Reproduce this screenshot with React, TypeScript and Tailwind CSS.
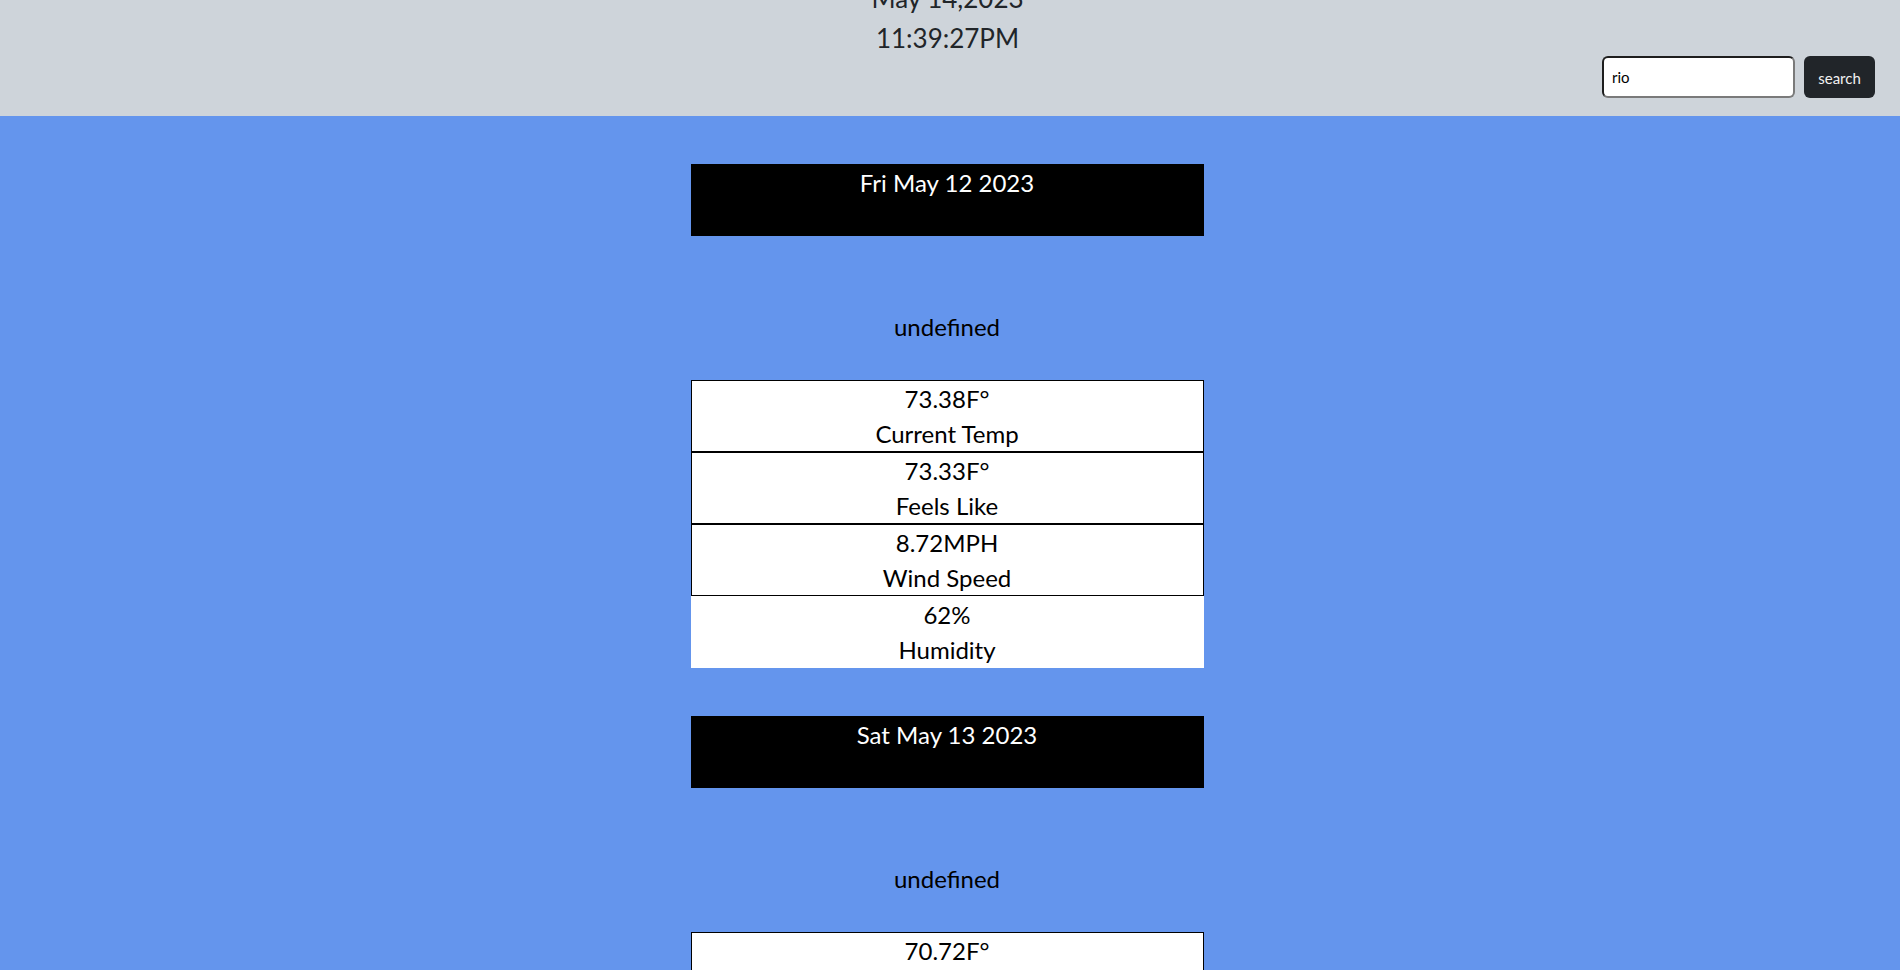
import React from "react";

type Day = {
  date: string;
  temp: string;
  feels: string;
  wind: string;
  humidity: string;
};

const days: Day[] = [
  { date: "Fri May 12 2023", temp: "73.38F°", feels: "73.33F°", wind: "8.72MPH", humidity: "62%" },
  { date: "Sat May 13 2023", temp: "70.72F°", feels: "70.9F°", wind: "7.4MPH", humidity: "71%" },
];

function StatRow({ value, label, bordered }: { value: string; label: string; bordered: boolean }) {
  return (
    <div
      className={
        bordered
          ? "h-[72px] bg-white border border-black flex flex-col items-center justify-center"
          : "h-[72px] bg-white flex flex-col items-center justify-center"
      }
    >
      <span className="leading-[35px]">{value}</span>
      <span className="leading-[35px]">{label}</span>
    </div>
  );
}

function DayCard({ day }: { day: Day }) {
  return (
    <div className="w-[513px] mt-[48px] flex flex-col">
      <div className="h-[72px] bg-black text-white text-center pt-[1px] leading-[36px]">{day.date}</div>
      <div className="pt-[73px] pb-[35px] text-center leading-[36px] text-black">undefined</div>
      <div className="flex flex-col text-black">
        <StatRow value={day.temp} label="Current Temp" bordered />
        <StatRow value={day.feels} label="Feels Like" bordered />
        <StatRow value={day.wind} label="Wind Speed" bordered />
        <StatRow value={day.humidity} label="Humidity" bordered={false} />
      </div>
    </div>
  );
}

export default function App() {
  return (
    <div className="min-h-screen bg-[#6495ed] font-['Lato',sans-serif] text-[24px]">
      <header className="h-[116px] bg-[#ced4da] flex overflow-hidden">
        <div className="flex-1" />
        <div className="flex flex-col items-center -mt-[22px] ml-[20px] text-[#212529] text-[26px] leading-[40px]">
          <span>May 14,2023</span>
          <span>11:39:27PM</span>
        </div>
        <div className="flex-1 flex items-end justify-end gap-[9px] pr-[25px] pb-[18px]">
          <input
            defaultValue="rio"
            className="w-[193px] h-[42px] bg-white rounded-[6px] border-2 border-t-[#1e1e1e] border-l-[#1e1e1e] border-b-[#7a7a7a] border-r-[#7a7a7a] px-[8px] text-[15px] text-black outline-none"
          />
          <button className="w-[71px] h-[42px] rounded-[6px] bg-[#212529] text-[#f1f1f1] text-[15px] pt-[2px]">search</button>
        </div>
      </header>
      <main className="flex flex-col items-center pr-[6px] pb-[48px]">
        {days.map((d) => (
          <DayCard key={d.date} day={d} />
        ))}
      </main>
    </div>
  );
}
